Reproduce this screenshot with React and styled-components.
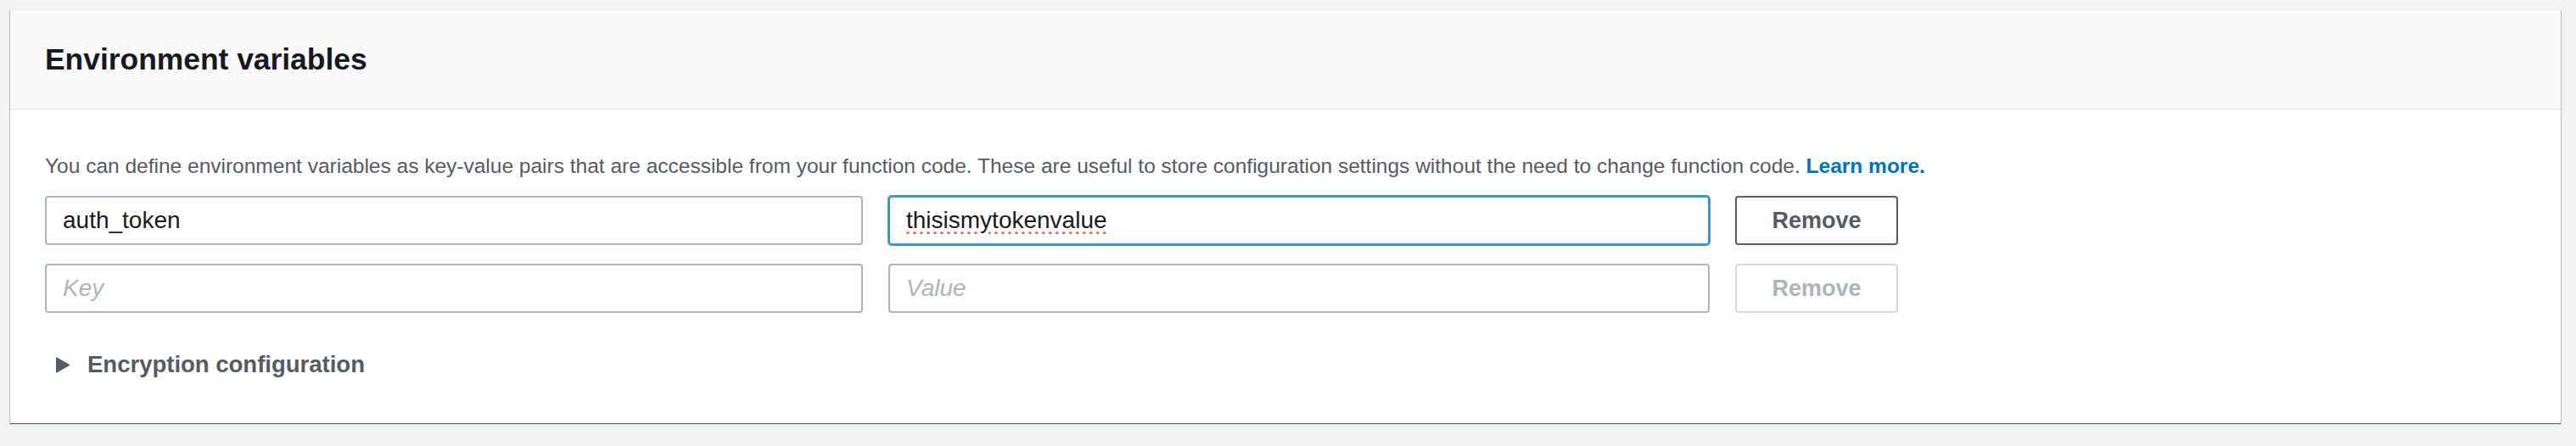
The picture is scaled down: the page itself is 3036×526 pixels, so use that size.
import styled, { createGlobalStyle } from "styled-components";

const GlobalStyle = createGlobalStyle`
  body {
    margin: 0;
    background-color: #f2f3f3;
    font-family: "Liberation Sans", Arial, sans-serif;
  }
`;

const variables = [
  { id: 1, key: "auth_token", value: "thisismytokenvalue", focused: true, misspelled: true },
  { id: 2, key: "", value: "", empty: true },
];

const App = () => {
  return (
    <>
      <GlobalStyle />
      <Page>
        <Panel>
          <PanelHeader>
            <h2>Environment variables</h2>
          </PanelHeader>
          <PanelBody>
            <Description>
              You can define environment variables as key-value pairs that are accessible from your
              function code. These are useful to store configuration settings without the need to
              change function code. <a href='#'>Learn more.</a>
            </Description>
            <VarGrid>
              {variables.map((item) => (
                <VarRow key={item.id}>
                  <TextInput readOnly placeholder='Key' defaultValue={item.key} />
                  <TextInput
                    readOnly
                    placeholder='Value'
                    defaultValue={item.value}
                    $focused={item.focused}
                    $misspelled={item.misspelled}
                  />
                  <RemoveButton disabled={item.empty}>Remove</RemoveButton>
                </VarRow>
              ))}
            </VarGrid>
            <Expander>
              <svg width='16' height='19' viewBox='0 0 16 19'>
                <path d='M1 1.5 L15 9.5 L1 17.5 Z' fill='#545b64' stroke='#545b64' strokeWidth='2' strokeLinejoin='round' />
              </svg>
              <span>Encryption configuration</span>
            </Expander>
          </PanelBody>
        </Panel>
      </Page>
    </>
  );
};

export default App;

const Page = styled.div`
  padding: 11px 18px 26px 12px;
`;

const Panel = styled.section`
  background-color: #fff;
  border-top: 1px solid #eaeded;
  box-shadow: 0 1px 1px 0 rgba(0, 28, 36, 0.5), 1px 1px 1px 0 rgba(0, 28, 36, 0.15),
    -1px 1px 1px 0 rgba(0, 28, 36, 0.15);
`;

const PanelHeader = styled.div`
  height: 116px;
  display: flex;
  align-items: center;
  padding-left: 41px;
  background-color: #fafafa;
  border-bottom: 2px solid #eaeded;
  h2 {
    margin: 0;
    font-size: 35.4px;
    font-weight: 700;
    color: #16191f;
  }
`;

const PanelBody = styled.div`
  padding: 48px 40px 49px 41px;
`;

const Description = styled.p`
  margin: 0 0 17px;
  font-size: 24.5px;
  line-height: 36px;
  color: #545b64;
  a {
    color: #0073bb;
    font-weight: 700;
    text-decoration: none;
  }
`;

const VarGrid = styled.div`
  display: flex;
  flex-direction: column;
  gap: 22px;
`;

const VarRow = styled.div`
  display: grid;
  grid-template-columns: 964px 968px 192px;
  column-gap: 30px;
  align-items: center;
`;

const TextInput = styled.input`
  box-sizing: border-box;
  height: 58px;
  width: 100%;
  padding: 0 19px;
  border: 2px solid ${(p) => (p.$focused ? "#3f97c3" : "#aab7b8")};
  box-shadow: ${(p) => (p.$focused ? "0 0 0 1px #3f97c3" : "none")};
  border-radius: 4px;
  background-color: #fff;
  font-family: "Liberation Sans", Arial, sans-serif;
  font-size: 28px;
  color: #16191f;
  outline: none;
  text-decoration: ${(p) => (p.$misspelled ? "underline dotted #e8776f" : "none")};
  text-decoration-thickness: 4px;
  text-underline-offset: 4px;
  &::placeholder {
    color: #aab7b8;
    font-style: italic;
  }
`;

const RemoveButton = styled.button`
  box-sizing: border-box;
  height: 58px;
  border: 2px solid #545b64;
  border-radius: 4px;
  background-color: #fff;
  font-family: "Liberation Sans", Arial, sans-serif;
  font-size: 27px;
  font-weight: 700;
  color: #545b64;
  cursor: pointer;
  &:disabled {
    border-color: #d5dbdb;
    color: #aab7b8;
    cursor: default;
  }
`;

const Expander = styled.div`
  display: flex;
  align-items: center;
  gap: 21px;
  height: 40px;
  margin-top: 41px;
  padding-left: 13px;
  font-size: 27.5px;
  font-weight: 700;
  color: #545b64;
  svg {
    flex-shrink: 0;
  }
`;
